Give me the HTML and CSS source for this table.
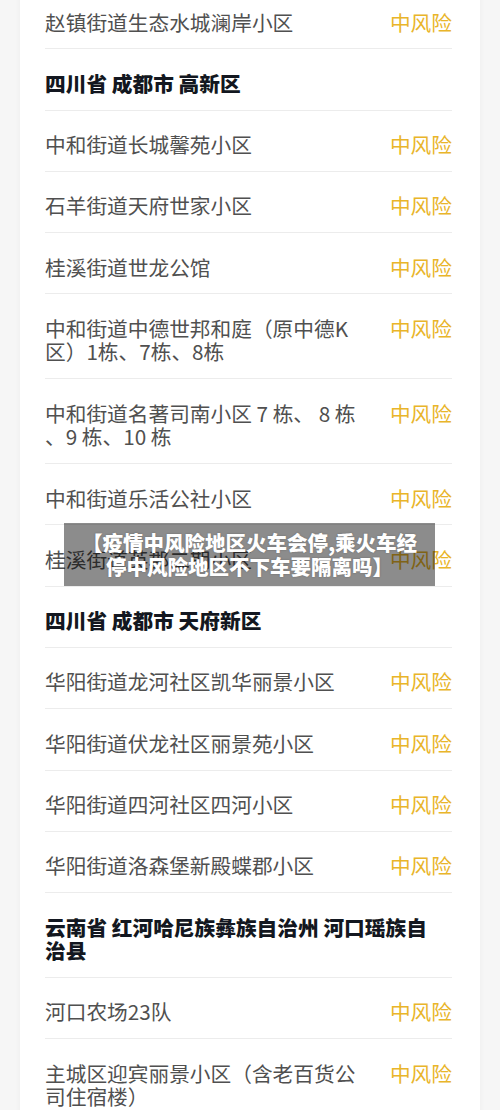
FILE: index.html
```html
<!DOCTYPE html>
<html lang="zh-CN">
<head>
    <meta charset="UTF-8">
    <meta name="viewport" content="width=device-width, initial-scale=1.0">
    <title>中风险地区</title>
    <link rel="stylesheet" href="styles.css">
</head>
<body>
    <div class="page">
        <div class="risk-card">
            <div class="row"><span class="place">赵镇街道生态水城澜岸小区</span><span class="level">中风险</span></div>

            <!-- 高新区 -->
            <div class="row area">四川省 成都市 高新区</div>
            <div class="row"><span class="place">中和街道长城馨苑小区</span><span class="level">中风险</span></div>
            <div class="row"><span class="place">石羊街道天府世家小区</span><span class="level">中风险</span></div>
            <div class="row"><span class="place">桂溪街道世龙公馆</span><span class="level">中风险</span></div>
            <div class="row"><span class="place">中和街道中德世邦和庭（原中德K区）1栋、7栋、8栋</span><span class="level">中风险</span></div>
            <div class="row"><span class="place">中和街道名著司南小区 7 栋、 8 栋、9 栋、10 栋</span><span class="level">中风险</span></div>
            <div class="row"><span class="place">中和街道乐活公社小区</span><span class="level">中风险</span></div>
            <div class="row"><span class="place">桂溪街道英郡二期小区</span><span class="level">中风险</span></div>

            <!-- 天府新区 -->
            <div class="row area">四川省 成都市 天府新区</div>
            <div class="row"><span class="place">华阳街道龙河社区凯华丽景小区</span><span class="level">中风险</span></div>
            <div class="row"><span class="place">华阳街道伏龙社区丽景苑小区</span><span class="level">中风险</span></div>
            <div class="row"><span class="place">华阳街道四河社区四河小区</span><span class="level">中风险</span></div>
            <div class="row"><span class="place">华阳街道洛森堡新殿蝶郡小区</span><span class="level">中风险</span></div>

            <!-- 河口 -->
            <div class="row area">云南省 红河哈尼族彝族自治州 河口瑶族自治县</div>
            <div class="row"><span class="place">河口农场23队</span><span class="level">中风险</span></div>
            <div class="row"><span class="place">主城区迎宾丽景小区（含老百货公司住宿楼）</span><span class="level">中风险</span></div>
        </div>

        <div class="title-banner">【疫情中风险地区火车会停,乘火车经停中风险地区不下车要隔离吗】</div>
    </div>
</body>
</html>
```

FILE: styles.css
```css
body {
    margin: 0;
    background-color: #f6f6f6;
    font-family: "Noto Sans CJK SC", "Noto Sans", sans-serif;
    overflow: hidden;
}
.page {
    position: relative;
    margin-top: -12px; /* list is scrolled a bit */
}
.risk-card {
    background-color: #fff;
    margin: 0 20px;
    padding: 0 28px 0 25px;
    box-shadow: 0 0 6px rgba(0, 0, 0, 0.04);
}
.row {
    display: flex;
    justify-content: space-between;
    align-items: flex-start;
    padding: 22.5px 0 14.3px;
    border-bottom: 1px solid #ececec;
    font-size: 20.7px;
    line-height: 23.5px;
}
.place {
    max-width: 316px;
    color: #505050;
    line-break: anywhere;
}
.level {
    flex-shrink: 0;
    color: #e9b52a;
}
.row.area {
    display: block;
    padding-right: 22px;
    font-weight: 900;
    color: #131720;
}
.title-banner {
    position: absolute;
    top: 535px;
    left: 64px;
    width: 371px;
    box-sizing: border-box;
    padding: 8px 17px;
    background-color: rgba(0, 0, 0, 0.45);
    color: #fff;
    font-size: 20.5px;
    font-weight: 900;
    line-height: 23.5px;
    text-align: center;
    text-shadow: 0 0 2px rgba(0, 0, 0, 0.25);
}
```
